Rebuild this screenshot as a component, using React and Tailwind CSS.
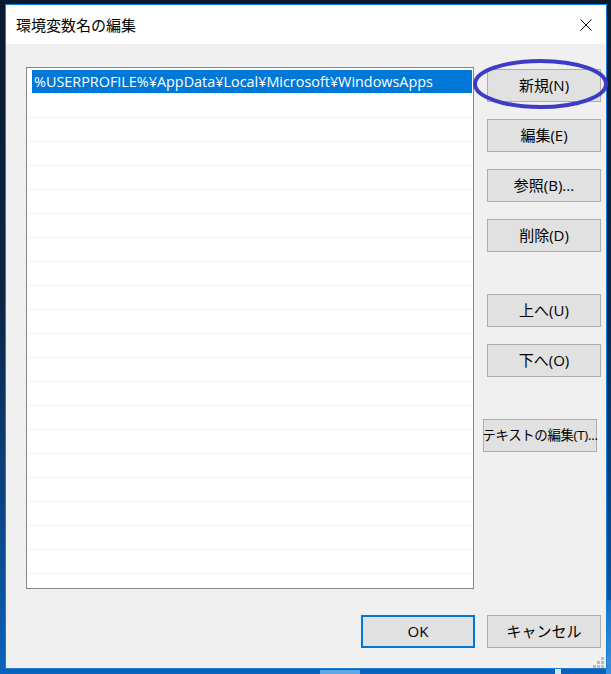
import React from "react";

function Btn({ children, className = "" }) {
  return (
    <div
      className={
        "w-[114px] h-[33px] flex items-center justify-center bg-[#e1e1e1] border border-[#adadad] text-[15px] text-black leading-none whitespace-nowrap " +
        className
      }
    >
      {children}
    </div>
  );
}

export default function App() {
  const rows = Array.from({ length: 22 });
  return (
    <div className="relative w-[611px] h-[674px] overflow-hidden bg-[linear-gradient(to_bottom,#0b1a2f_0%,#0c2547_45%,#0b4f98_85%,#0a62bd_100%)] font-['Open_Sans','Noto_Sans_CJK_JP',sans-serif]">
      {/* wallpaper streaks */}
      <div className="absolute left-[320px] top-[670px] w-[40px] h-[4px] bg-[#5fa6e6]" />
      <div className="absolute left-[555px] top-[668px] w-[6px] h-[6px] bg-[#cfe6fa]" />
      <div className="absolute left-[606px] top-[600px] w-[5px] h-[74px] bg-[linear-gradient(to_bottom,#1d6fc4,#3d8fe0)]" />

      {/* dialog window */}
      <div className="relative ml-[5px] mt-[4px] w-[602px] h-[665px] border border-[#1a7fd4] flex flex-col">
        {/* title bar */}
        <div className="h-[39px] bg-white flex items-center justify-between pl-[10px] pr-[14px]">
          <span className="text-[15px] text-black leading-none font-['Noto_Sans_CJK_JP',sans-serif]">
            環境変数名の編集
          </span>
          <svg width="12" height="12" viewBox="0 0 12 12">
            <path d="M0.5 0.5 L11.5 11.5 M11.5 0.5 L0.5 11.5" stroke="#000" strokeWidth="1" />
          </svg>
        </div>

        {/* body */}
        <div className="flex-1 bg-[#f0f0f0] flex flex-col pl-[20px] pt-[23px]">
          <div className="flex">
            {/* list box */}
            <div className="w-[448px] h-[522px] border border-[#828790] bg-white overflow-hidden pt-[2px] px-[1px]">
              {rows.map((_, i) => (
                <div key={i} className="h-[24px] border-b border-[#f0f0f0] flex">
                  {i === 0 && (
                    <div className="ml-[4px] flex-1 h-[23px] bg-[#0078d7] text-white text-[14.4px] leading-none flex items-center pl-[2px] pt-[2px] whitespace-nowrap">
                      %USERPROFILE%¥AppData¥Local¥Microsoft¥WindowsApps
                    </div>
                  )}
                </div>
              ))}
            </div>

            {/* buttons column */}
            <div className="ml-[13px] pt-[2px] flex flex-col">
              <Btn>新規(N)</Btn>
              <Btn className="mt-[17px]">編集(E)</Btn>
              <Btn className="mt-[17px]">参照(B)...</Btn>
              <Btn className="mt-[17px]">削除(D)</Btn>
              <Btn className="mt-[42px]">上へ(U)</Btn>
              <Btn className="mt-[17px]">下へ(O)</Btn>
              <Btn className="mt-[42px] -ml-[4px] !text-[13.4px] tracking-[-0.3px]">テキストの編集(T)...</Btn>
            </div>
          </div>

          {/* bottom buttons */}
          <div className="flex mt-[26px] pl-[335px]">
            <div className="w-[114px] h-[33px] flex items-center justify-center bg-[#e1e1e1] border-2 border-[#0078d7] text-[15px] text-black leading-none">
              OK
            </div>
            <Btn className="ml-[12px]">キャンセル</Btn>
          </div>
        </div>

        {/* resize grip */}
        <div className="absolute right-[2px] bottom-[0px] grid grid-cols-3 gap-[1px]">
          <div className="w-[3px] h-[3px]" />
          <div className="w-[3px] h-[3px]" />
          <div className="w-[3px] h-[3px] bg-[#bcbcbc]" />
          <div className="w-[3px] h-[3px]" />
          <div className="w-[3px] h-[3px] bg-[#bcbcbc]" />
          <div className="w-[3px] h-[3px] bg-[#bcbcbc]" />
          <div className="w-[3px] h-[3px] bg-[#bcbcbc]" />
          <div className="w-[3px] h-[3px] bg-[#bcbcbc]" />
          <div className="w-[3px] h-[3px] bg-[#bcbcbc]" />
        </div>
      </div>

      {/* hand-drawn ellipse highlight */}
      <svg className="absolute left-[470px] top-[56px]" width="141" height="56" viewBox="0 0 141 56">
        <ellipse cx="70.5" cy="28" rx="65.5" ry="23" fill="none" stroke="#3c3cc6" strokeWidth="4" />
      </svg>
    </div>
  );
}
